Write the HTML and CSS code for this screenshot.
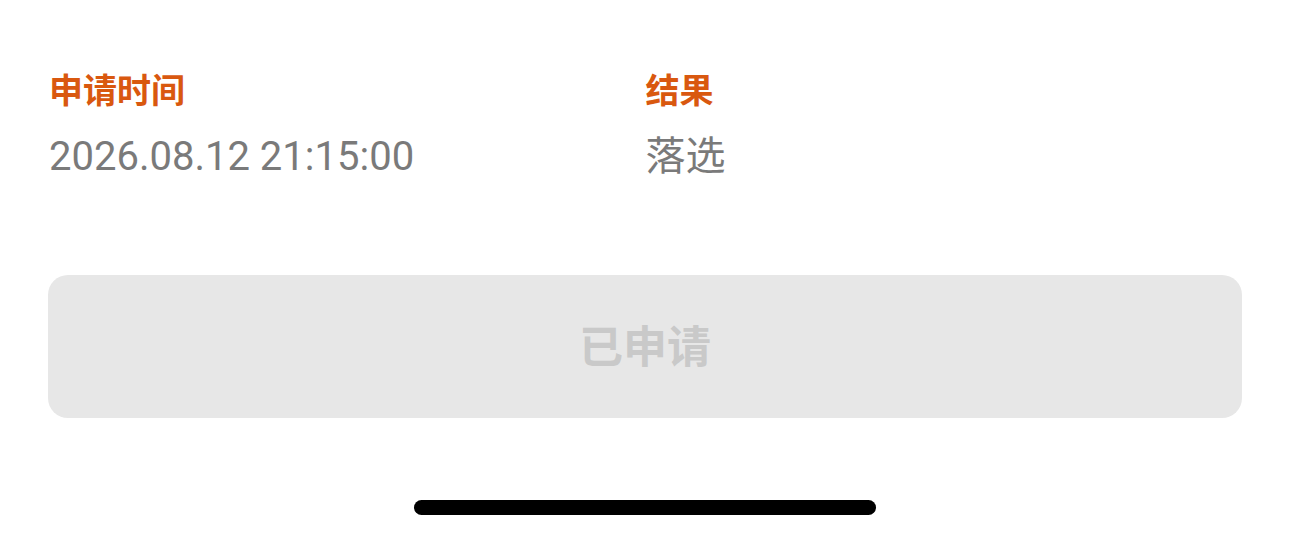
FILE: index.html
```html
<!DOCTYPE html>
<html lang="zh-CN">
<head>
<meta charset="utf-8">
<title>申请详情</title>
<link rel="stylesheet" href="styles.css">
</head>
<body>
<main class="page">
  <section class="info">
    <div class="field">
      <div class="label">申请时间</div>
      <div class="value">2026.08.12 21:15:00</div>
    </div>
    <div class="field">
      <div class="label">结果</div>
      <div class="value">落选</div>
    </div>
  </section>
  <button class="btn" disabled>已申请</button>
  <div class="home"><span class="home-bar"></span></div>
</main>
</body>
</html>
```
FILE: styles.css
```css
html, body {
  margin: 0;
  padding: 0;
  background: #ffffff;
}
body {
  width: 1290px;
  height: 539px;
  overflow: hidden;
  font-family: "Roboto", "Noto Sans CJK SC", sans-serif;
}
.page {
  padding: 0 48px;
  display: flex;
  flex-direction: column;
}
.info {
  display: grid;
  grid-template-columns: 1fr 1fr;
  padding-top: 69px;
  padding-left: 1px;
}
.field {
  display: flex;
  flex-direction: column;
}
.label {
  font-family: "Noto Sans CJK SC", sans-serif;
  font-size: 34px;
  font-weight: 700;
  line-height: 40px;
  color: #d9580f;
}
.value {
  margin-top: 28px;
  font-size: 40px;
  line-height: 40px;
  color: #7a7a7a;
}
.btn {
  margin-top: 98px;
  height: 143px;
  width: 100%;
  border: none;
  border-radius: 20px;
  background: #e7e7e7;
  color: #c9c9c9;
  font-family: "Noto Sans CJK SC", sans-serif;
  font-size: 44px;
  font-weight: 700;
  padding: 0 0 6px;
}
.home {
  display: flex;
  justify-content: center;
  padding-top: 82px;
}
.home-bar {
  width: 462px;
  height: 15px;
  border-radius: 8px;
  background: #000000;
}
```
